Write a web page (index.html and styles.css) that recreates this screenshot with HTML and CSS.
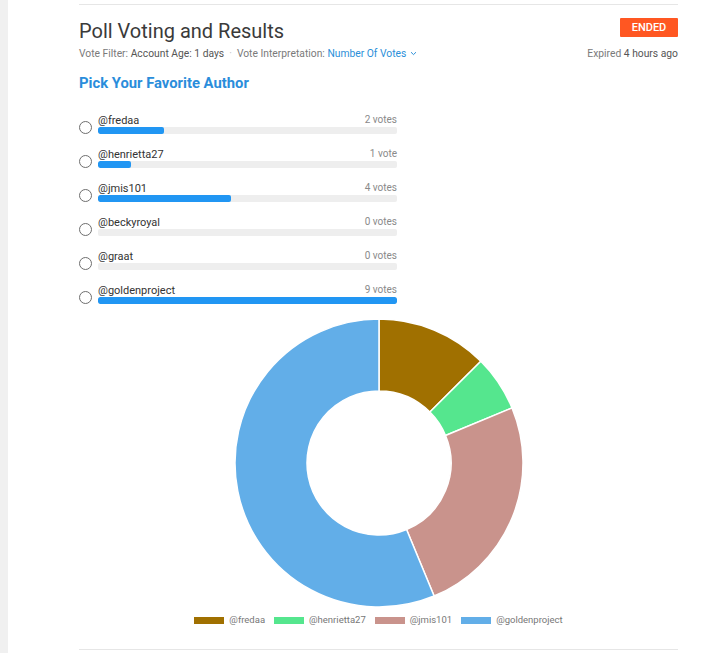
FILE: index.html
```html
<!DOCTYPE html>
<html lang="en">
<head>
<meta charset="utf-8">
<title>Poll Voting and Results</title>
<link rel="stylesheet" href="styles.css">
</head>
<body>
<div class="page">
  <aside class="strip"></aside>
  <main class="main">
    <section class="poll">
      <header class="poll-head">
        <div class="head-left">
          <h1 class="title">Poll Voting and Results</h1>
          <div class="meta">Vote Filter: <span class="strong">Account Age: 1 days</span><span class="dot">·</span>Vote Interpretation: <span class="link">Number Of Votes<svg class="chev" width="7" height="5" viewBox="0 0 7 5"><path d="M1 1.2 L3.5 3.6 L6 1.2" fill="none" stroke="#2b8fd9" stroke-width="1"/></svg></span></div>
        </div>
        <div class="head-right">
          <span class="badge">ENDED</span>
          <div class="meta">Expired <span class="strong">4 hours ago</span></div>
        </div>
      </header>

      <h2 class="question">Pick Your Favorite Author</h2>

      <ul class="options">
        <li class="option">
          <span class="radio"></span>
          <div class="opt-body">
            <div class="opt-line"><span class="opt-name">@fredaa</span><span class="opt-votes">2 votes</span></div>
            <div class="bar"><div class="fill" style="width:22.22%"></div></div>
          </div>
        </li>
        <li class="option">
          <span class="radio"></span>
          <div class="opt-body">
            <div class="opt-line"><span class="opt-name">@henrietta27</span><span class="opt-votes">1 vote</span></div>
            <div class="bar"><div class="fill" style="width:11.11%"></div></div>
          </div>
        </li>
        <li class="option">
          <span class="radio"></span>
          <div class="opt-body">
            <div class="opt-line"><span class="opt-name">@jmis101</span><span class="opt-votes">4 votes</span></div>
            <div class="bar"><div class="fill" style="width:44.44%"></div></div>
          </div>
        </li>
        <li class="option">
          <span class="radio"></span>
          <div class="opt-body">
            <div class="opt-line"><span class="opt-name">@beckyroyal</span><span class="opt-votes">0 votes</span></div>
            <div class="bar"><div class="fill" style="width:0%"></div></div>
          </div>
        </li>
        <li class="option">
          <span class="radio"></span>
          <div class="opt-body">
            <div class="opt-line"><span class="opt-name">@graat</span><span class="opt-votes">0 votes</span></div>
            <div class="bar"><div class="fill" style="width:0%"></div></div>
          </div>
        </li>
        <li class="option">
          <span class="radio"></span>
          <div class="opt-body">
            <div class="opt-line"><span class="opt-name">@goldenproject</span><span class="opt-votes">9 votes</span></div>
            <div class="bar"><div class="fill" style="width:100%"></div></div>
          </div>
        </li>
      </ul>

      <div class="chart">
        <svg class="donut" width="290" height="290" viewBox="0 0 290 290">
          <g stroke="#ffffff" stroke-width="1.5" stroke-linejoin="round">
            <path fill="#a07000" d="M145 1 A144 144 0 0 1 246.82 43.18 L195.91 94.09 A72 72 0 0 0 145 73 Z"/>
            <path fill="#55e68e" d="M246.82 43.18 A144 144 0 0 1 278.04 89.89 L211.52 117.45 A72 72 0 0 0 195.91 94.09 Z"/>
            <path fill="#c9938c" d="M278.04 89.89 A144 144 0 0 1 200.11 278.04 L172.55 211.52 A72 72 0 0 0 211.52 117.45 Z"/>
            <path fill="#62aee8" d="M200.11 278.04 A144 144 0 1 1 145 1 L145 73 A72 72 0 1 0 172.55 211.52 Z"/>
          </g>
        </svg>
      </div>

      <ul class="legend">
        <li class="legend-item"><span class="swatch sw-fredaa"></span>@fredaa</li>
        <li class="legend-item"><span class="swatch sw-henrietta"></span>@henrietta27</li>
        <li class="legend-item"><span class="swatch sw-jmis"></span>@jmis101</li>
        <li class="legend-item"><span class="swatch sw-golden"></span>@goldenproject</li>
      </ul>
    </section>
  </main>
</div>
</body>
</html>
```

FILE: styles.css
```css
* { box-sizing: border-box; }
html, body { margin: 0; padding: 0; background: #ffffff; }
body {
  font-family: Roboto, "Liberation Sans", Arial, sans-serif;
  color: #333333;
}
.page {
  display: flex;
  min-height: 653px;
}
.strip {
  width: 8px;
  flex: 0 0 8px;
  background: #f0f0f0;
}
.main {
  flex: 1;
  padding: 4px 42px 0 71px;
}
.poll {
  border-top: 1px solid #e6e6e6;
  border-bottom: 1px solid #e6e6e6;
  padding-top: 13px;
  padding-bottom: 23px;
}
.poll-head {
  display: flex;
  justify-content: space-between;
  align-items: flex-end;
}
.head-left, .head-right {
  display: flex;
  flex-direction: column;
}
.head-right { align-items: flex-end; }
.title {
  margin: 0;
  font-size: 20px;
  line-height: 24px;
  font-weight: 400;
  color: #3a3a3a;
}
.meta {
  margin-top: 4px;
  font-size: 10.3px;
  line-height: 13px;
  color: #7a7a7a;
  white-space: nowrap;
}
.meta .strong { color: #555555; }
.meta .dot { color: #c4c4c4; margin: 0 5px; }
.meta .link { color: #2b8fd9; }
.chev { margin-left: 4px; vertical-align: 1px; }
.badge {
  display: inline-flex;
  align-items: center;
  justify-content: center;
  width: 58px;
  height: 19px;
  background: #ff5722;
  color: #ffffff;
  font-size: 11px;
  font-weight: 500;
  border-radius: 1px;
  margin-bottom: 6px;
}
.question {
  margin: 15px 0 0;
  font-size: 14.8px;
  line-height: 17px;
  font-weight: 700;
  color: #2a8ddb;
}
.options {
  list-style: none;
  margin: 22px 0 0;
  padding: 0;
  width: 318px;
  display: flex;
  flex-direction: column;
  gap: 14px;
}
.option {
  display: flex;
  align-items: center;
  gap: 6px;
}
.radio {
  width: 13px;
  height: 13px;
  flex: 0 0 13px;
  border: 1.5px solid #6e6e6e;
  border-radius: 50%;
  margin-top: 6px;
}
.opt-body { flex: 1; }
.opt-line {
  display: flex;
  justify-content: space-between;
  align-items: baseline;
  height: 13px;
}
.opt-name {
  font-size: 11px;
  line-height: 13px;
  color: #333333;
}
.opt-votes {
  font-size: 10px;
  line-height: 12px;
  color: #8a8a8a;
  position: relative;
  top: -1px;
}
.bar {
  height: 7px;
  background: #eeeeee;
  border-radius: 2px;
  overflow: hidden;
}
.fill {
  height: 100%;
  background: #2196f3;
  border-radius: 2px;
}
.chart {
  display: flex;
  justify-content: center;
  padding-top: 14px;
}
.donut { display: block; }
.legend {
  list-style: none;
  margin: 6px 0 0;
  padding: 0;
  display: flex;
  justify-content: center;
  gap: 9px;
}
.legend-item {
  display: flex;
  align-items: center;
  gap: 5px;
  font-size: 9.5px;
  line-height: 12px;
  color: #777777;
}
.swatch {
  width: 30px;
  height: 7px;
  display: inline-block;
}
.sw-fredaa { background: #a07000; }
.sw-henrietta { background: #55e68e; }
.sw-jmis { background: #c9938c; }
.sw-golden { background: #62aee8; }
```
